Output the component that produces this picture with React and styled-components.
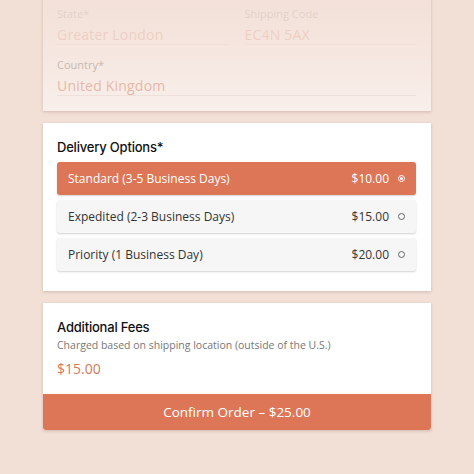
import React, { useState } from 'react';
import styled, { createGlobalStyle } from 'styled-components';

const GlobalStyle = createGlobalStyle`
  html, body {
    margin: 0;
    padding: 0;
    background: #f2dfd6;
  }
  body {
    font-family: "Open Sans", "Liberation Sans", sans-serif;
  }
  * {
    box-sizing: border-box;
  }
`;

const options = [
  { id: 'standard', label: 'Standard (3-5 Business Days)', price: '$10.00' },
  { id: 'expedited', label: 'Expedited (2-3 Business Days)', price: '$15.00' },
  { id: 'priority', label: 'Priority (1 Business Day)', price: '$20.00' },
];

const App = () => {
  const [selected, setSelected] = useState('standard');

  return (
    <>
      <GlobalStyle />
      <Page>
        <AddressCard>
          <FieldGrid>
            <Field>
              <Label>State*</Label>
              <Value>Greater London</Value>
            </Field>
            <Field>
              <Label>Shipping Code</Label>
              <Value>EC4N 5AX</Value>
            </Field>
            <Field>
              <Label>Country*</Label>
              <Value>United Kingdom</Value>
            </Field>
          </FieldGrid>
        </AddressCard>

        <Card>
          <Heading>Delivery Options*</Heading>
          <OptionList>
            {options.map((o) => (
              <Option
                key={o.id}
                $active={selected === o.id}
                onClick={() => setSelected(o.id)}
              >
                <span>{o.label}</span>
                <Price>{o.price}</Price>
                <Radio $active={selected === o.id} />
              </Option>
            ))}
          </OptionList>
        </Card>

        <FeesGroup>
          <FeesCard>
            <Heading>Additional Fees</Heading>
            <Note>Charged based on shipping location (outside of the U.S.)</Note>
            <Fee>$15.00</Fee>
          </FeesCard>
          <ConfirmButton>Confirm Order – $25.00</ConfirmButton>
        </FeesGroup>
      </Page>
    </>
  );
};

const Page = styled.div`
  width: 474px;
  height: 474px;
  overflow: hidden;
  padding: 0 43px;
  display: flex;
  flex-direction: column;
  gap: 12px;
`;

const Card = styled.div`
  background: #ffffff;
  padding: 16px 15px 20px 14px;
  box-shadow: 0 1px 3px rgba(120, 80, 60, 0.25);
`;

const AddressCard = styled(Card)`
  position: relative;
  margin-top: -14px;
  padding: 20px 15px 15px 14px;

  &::after {
    content: "";
    position: absolute;
    inset: 0;
    background: linear-gradient(
      to bottom,
      rgba(242, 223, 214, 0.97) 0%,
      rgba(242, 223, 214, 0.82) 45%,
      rgba(242, 223, 214, 0.5) 100%
    );
    pointer-events: none;
  }
`;

const FieldGrid = styled.div`
  display: grid;
  grid-template-columns: 1fr 1fr;
  column-gap: 16px;
  row-gap: 12px;

  & > div:last-child {
    grid-column: 1 / -1;
  }
`;

const Field = styled.div`
  display: flex;
  flex-direction: column;
  gap: 4px;
  border-bottom: 1px solid #e8e2df;
`;

const Label = styled.div`
  font-size: 11px;
  color: #555;
`;

const Value = styled.div`
  font-size: 14px;
  line-height: 19px;
  color: #d5775c;
  letter-spacing: 0.2px;
`;

const Heading = styled.div`
  font-family: Inter, "Liberation Sans", sans-serif;
  font-size: 13px;
  font-weight: 500;
  color: #111;
  letter-spacing: -0.2px;
  margin-bottom: 7px;
`;

const OptionList = styled.div`
  display: flex;
  flex-direction: column;
  gap: 5px;
`;

const Option = styled.div`
  display: flex;
  align-items: center;
  height: 33px;
  padding: 0 11px;
  border-radius: 3px;
  font-size: 12px;
  cursor: pointer;
  background: ${(p) => (p.$active ? '#dc7657' : '#f6f6f6')};
  color: ${(p) => (p.$active ? '#ffffff' : '#333')};
  box-shadow: 0 1px 2px rgba(0, 0, 0, 0.18);

  span:first-child {
    flex: 1;
  }
`;

const Price = styled.span`
  font-size: 12px;
  margin-right: 9px;
`;

const Radio = styled.span`
  width: 7px;
  height: 7px;
  border-radius: 50%;
  border: 1px solid ${(p) => (p.$active ? '#ffffff' : '#666')};
  position: relative;

  &::after {
    content: "";
    display: ${(p) => (p.$active ? 'block' : 'none')};
    position: absolute;
    inset: 1px;
    border-radius: 50%;
    background: #fff;
  }
`;

const FeesGroup = styled.div`
  display: flex;
  flex-direction: column;
  box-shadow: 0 1px 3px rgba(120, 80, 60, 0.25);
`;

const FeesCard = styled.div`
  background: #fff;
  padding: 16px 14px 16px;

  ${Heading} {
    margin-bottom: 3px;
  }
`;

const Note = styled.div`
  font-size: 10.5px;
  color: #777;
`;

const Fee = styled.div`
  margin-top: 7px;
  font-size: 14px;
  color: #d5775c;
`;

const ConfirmButton = styled.button`
  height: 36px;
  border: none;
  border-radius: 0 0 3px 3px;
  background: #dc7657;
  color: #fff;
  font-family: "Open Sans", "Liberation Sans", sans-serif;
  font-size: 13.5px;
  cursor: pointer;
`;

export default App;
